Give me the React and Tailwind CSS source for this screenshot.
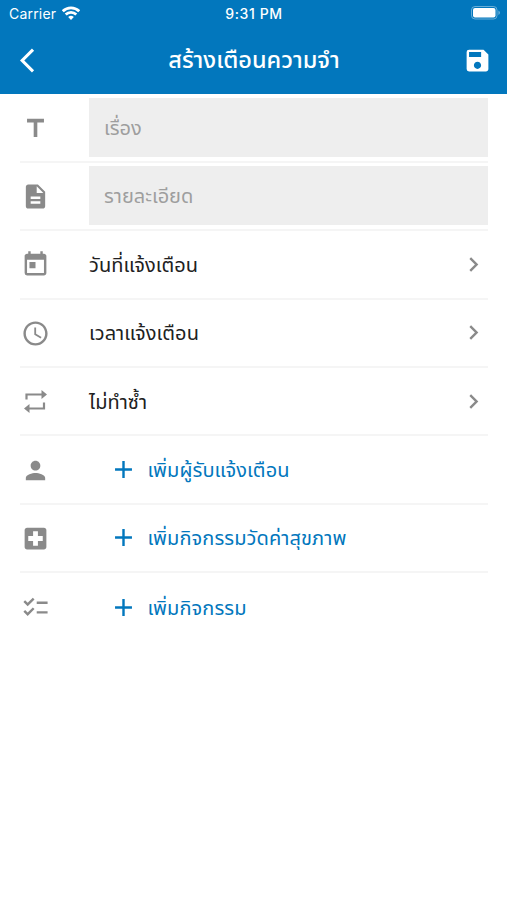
import {
  MdAccessTime,
  MdAdd,
  MdArrowBackIos,
  MdChecklist,
  MdChevronRight,
  MdDescription,
  MdLocalHospital,
  MdPerson,
  MdSave,
  MdTitle,
  MdToday,
} from 'react-icons/md';

const RepeatIcon = ({ className }) => (
  <svg viewBox="0 0 29 29" className={className}>
    <g fill="none" stroke="currentColor" strokeWidth="2.2">
      <path d="M5.500 12.500V7.500h16" />
      <path d="M23 15.500v6H7" />
    </g>
    <path d="M20.500 3l5.500 4.500-5.500 4.500zM8.500 17l-5.500 4.500 5.500 4.500z" fill="currentColor" />
  </svg>
);

const WifiIcon = () => (
  <svg viewBox="0 0 18 14" className="w-[18px] h-[14px] ml-[6px] mb-px">
    <g fill="none" stroke="white" strokeWidth="2.700">
      <path d="M0.800 5.200a11.600 11.600 0 0 1 16.400 0" />
      <path d="M3.700 8.500a7.500 7.500 0 0 1 10.600 0" />
    </g>
    <path d="M9 14l-2.800-2.900a4 4 0 0 1 5.600 0z" fill="white" />
  </svg>
);

const BatteryIcon = () => (
  <svg viewBox="0 0 30 14" className="w-[30px] h-[14px] mb-px">
    <rect x="0.5" y="0.5" width="25.500" height="12.500" rx="3.500" fill="none" stroke="white" strokeOpacity="0.4" />
    <rect x="2" y="2" width="22.500" height="9.500" rx="2" fill="white" />
    <path d="M27.500 4.500a2.600 2.600 0 0 1 0 4.500z" fill="white" fillOpacity="0.5" />
  </svg>
);

const fields = [
  { icon: MdTitle, label: 'เรื่อง' },
  { icon: MdDescription, label: 'รายละเอียด' },
];

const options = [
  { icon: MdToday, label: 'วันที่แจ้งเตือน' },
  { icon: MdAccessTime, label: 'เวลาแจ้งเตือน' },
  { icon: RepeatIcon, label: 'ไม่ทำซ้ำ' },
];

const actions = [
  { icon: MdPerson, label: 'เพิ่มผู้รับแจ้งเตือน' },
  { icon: MdLocalHospital, label: 'เพิ่มกิจกรรมวัดค่าสุขภาพ' },
  { icon: MdChecklist, label: 'เพิ่มกิจกรรม' },
];

const Row = ({ icon: Icon, last, children }) => (
  <div
    className={`h-[68.4px] flex items-center ${
      last ? '' : 'border-b-2 border-[#f5f5f5]'
    }`}
  >
    <div className="w-[69px] shrink-0 pl-[0.500px] pt-px">
      <Icon className="w-[29px] h-[29px] text-[#8a8a8a]" />
    </div>
    {children}
  </div>
);

const App = () => {
  return (
    <div className="w-full h-[900px] bg-white overflow-hidden font-['Noto_Sans_Thai','Noto_Sans','Open_Sans',sans-serif]">
      <header className="h-[93.6px] bg-[#0277bd] text-white">
        <div className="h-[27px] grid grid-cols-3 items-center pl-[9px] pr-[6px] font-['Inter',sans-serif] text-[14px]">
          <div className="flex items-center">
            <span className="tracking-[0.2px]">Carrier</span>
            <WifiIcon />
          </div>
          <span className="text-center font-medium text-[14px] tracking-[0.6px] pr-[2px]">9:31 PM</span>
          <div className="flex justify-end">
            <BatteryIcon />
          </div>
        </div>
        <div className="h-[66px] flex items-center justify-between pl-5 pr-[15px]">
          <MdArrowBackIos className="w-[29px] h-[29px]" />
          <h1 className="pt-[2px] pr-[4px] text-[23.500px] leading-8 font-medium whitespace-nowrap">
            สร้างเตือนความจำ
          </h1>
          <MdSave className="w-[29px] h-[29px]" />
        </div>
      </header>

      <main className="pl-5 pr-[19px] pt-[0.8px]">
        {fields.map(({ icon, label }) => (
          <Row key={label} icon={icon}>
            <div className="flex-1 h-[59px] flex items-center px-[15px] bg-[#eeeeee] text-[#9e9e9e] text-[20px]">
              <span className="pt-[3px]">{label}</span>
            </div>
          </Row>
        ))}

        {options.map(({ icon, label }) => (
          <Row key={label} icon={icon}>
            <span className="flex-1 pt-[3px] text-[20px] tracking-[0.05px] text-[#212121]">{label}</span>
            <MdChevronRight className="w-[29px] h-[29px] text-[#8a8a8a]" />
          </Row>
        ))}

        {actions.map(({ icon, label }, index) => (
          <Row key={label} icon={icon} last={index === actions.length - 1}>
            <button className="flex items-center pl-[19.500px] gap-[10px] text-[20px] tracking-[0.1px] text-[#0277bd]">
              <MdAdd className="w-[29px] h-[29px]" />
              <span className="pt-[3px]">{label}</span>
            </button>
          </Row>
        ))}
      </main>
    </div>
  );
};

export default App;
